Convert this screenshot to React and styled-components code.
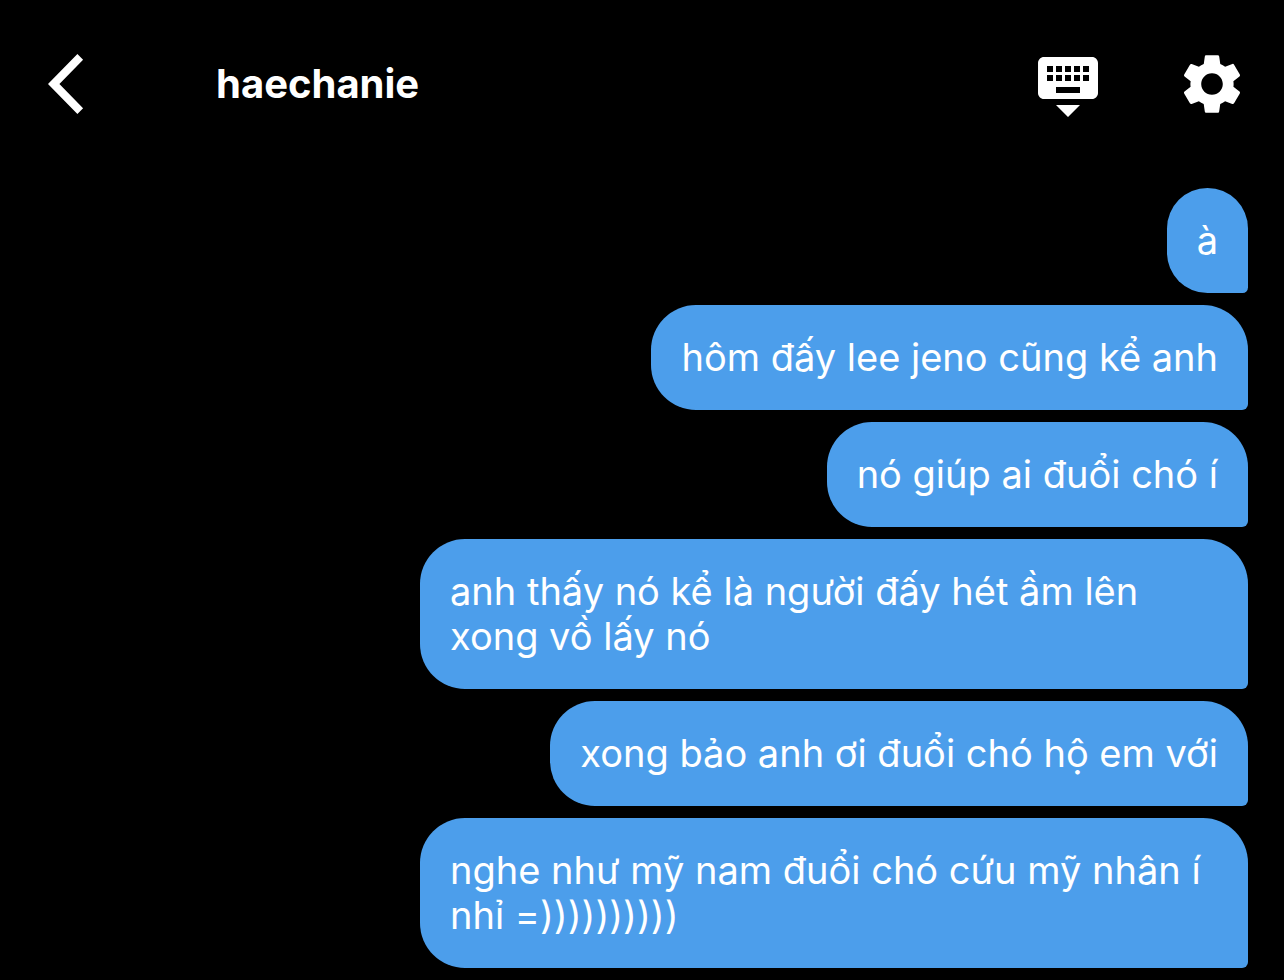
import styled, { createGlobalStyle } from "styled-components";
import { MdKeyboardHide, MdSettings } from "react-icons/md";

const messages = [
    "à",
    "hôm đấy lee jeno cũng kể anh",
    "nó giúp ai đuổi chó í",
    "anh thấy nó kể là người đấy hét ầm lên xong vồ lấy nó",
    "xong bảo anh ơi đuổi chó hộ em với",
    "nghe như mỹ nam đuổi chó cứu mỹ nhân í nhỉ =))))))))))",
];

// styles
const GlobalStyle = createGlobalStyle`
    * {
        box-sizing: border-box;
    }

    body {
        margin: 0;
        background: #000;
        color: #fff;
        font-family: Inter, Roboto, "Liberation Sans", sans-serif;
    }
`;

const Header = styled.header`
    display: flex;
    align-items: center;
    padding: 48px 36px 48px 48px;
`;

const Title = styled.h1`
    flex: 1;
    margin: 0 0 0 96px;
    font-size: 40px;
    font-weight: 700;
    line-height: 48px;
`;

const Actions = styled.div`
    display: flex;
    gap: 72px;
`;

const Button = styled.button`
    display: flex;
    padding: 0;
    border: 0;
    background: none;
    color: inherit;
    cursor: pointer;

    svg {
        width: 72px;
        height: 72px;
    }
`;

const MessageList = styled.ul`
    display: flex;
    flex-direction: column;
    align-items: flex-end;
    gap: 12px;
    margin: 0;
    padding: 20px 36px 12px;
    list-style: none;
`;

const Bubble = styled.li`
    max-width: min(828px, 100%);
    padding: 30px;
    border-radius: 45px 45px 6px 45px;
    background: #4c9eeb;
    font-size: 38px;
    line-height: 45px;
`;

// components
const BackIcon = (props) => {
    return (
        <svg viewBox="0 0 24 24" fill="currentColor" {...props}>
            <path d="M11.7 3.9 9.8 2 0 12l9.8 10 1.9-1.9L3.8 12z" />
        </svg>
    );
};

const IconButton = ({ label, icon: Icon }) => {
    return (
        <Button type="button" aria-label={label}>
            <Icon aria-hidden="true" />
        </Button>
    );
};

const App = () => {
    return (
        <>
            <GlobalStyle />
            <Header>
                <IconButton label="Back" icon={BackIcon} />
                <Title>haechanie</Title>
                <Actions>
                    <IconButton label="Hide keyboard" icon={MdKeyboardHide} />
                    <IconButton label="Settings" icon={MdSettings} />
                </Actions>
            </Header>
            <main>
                <MessageList>
                    {messages.map((message) => (
                        <Bubble key={message}>{message}</Bubble>
                    ))}
                </MessageList>
            </main>
        </>
    );
};

export default App;
